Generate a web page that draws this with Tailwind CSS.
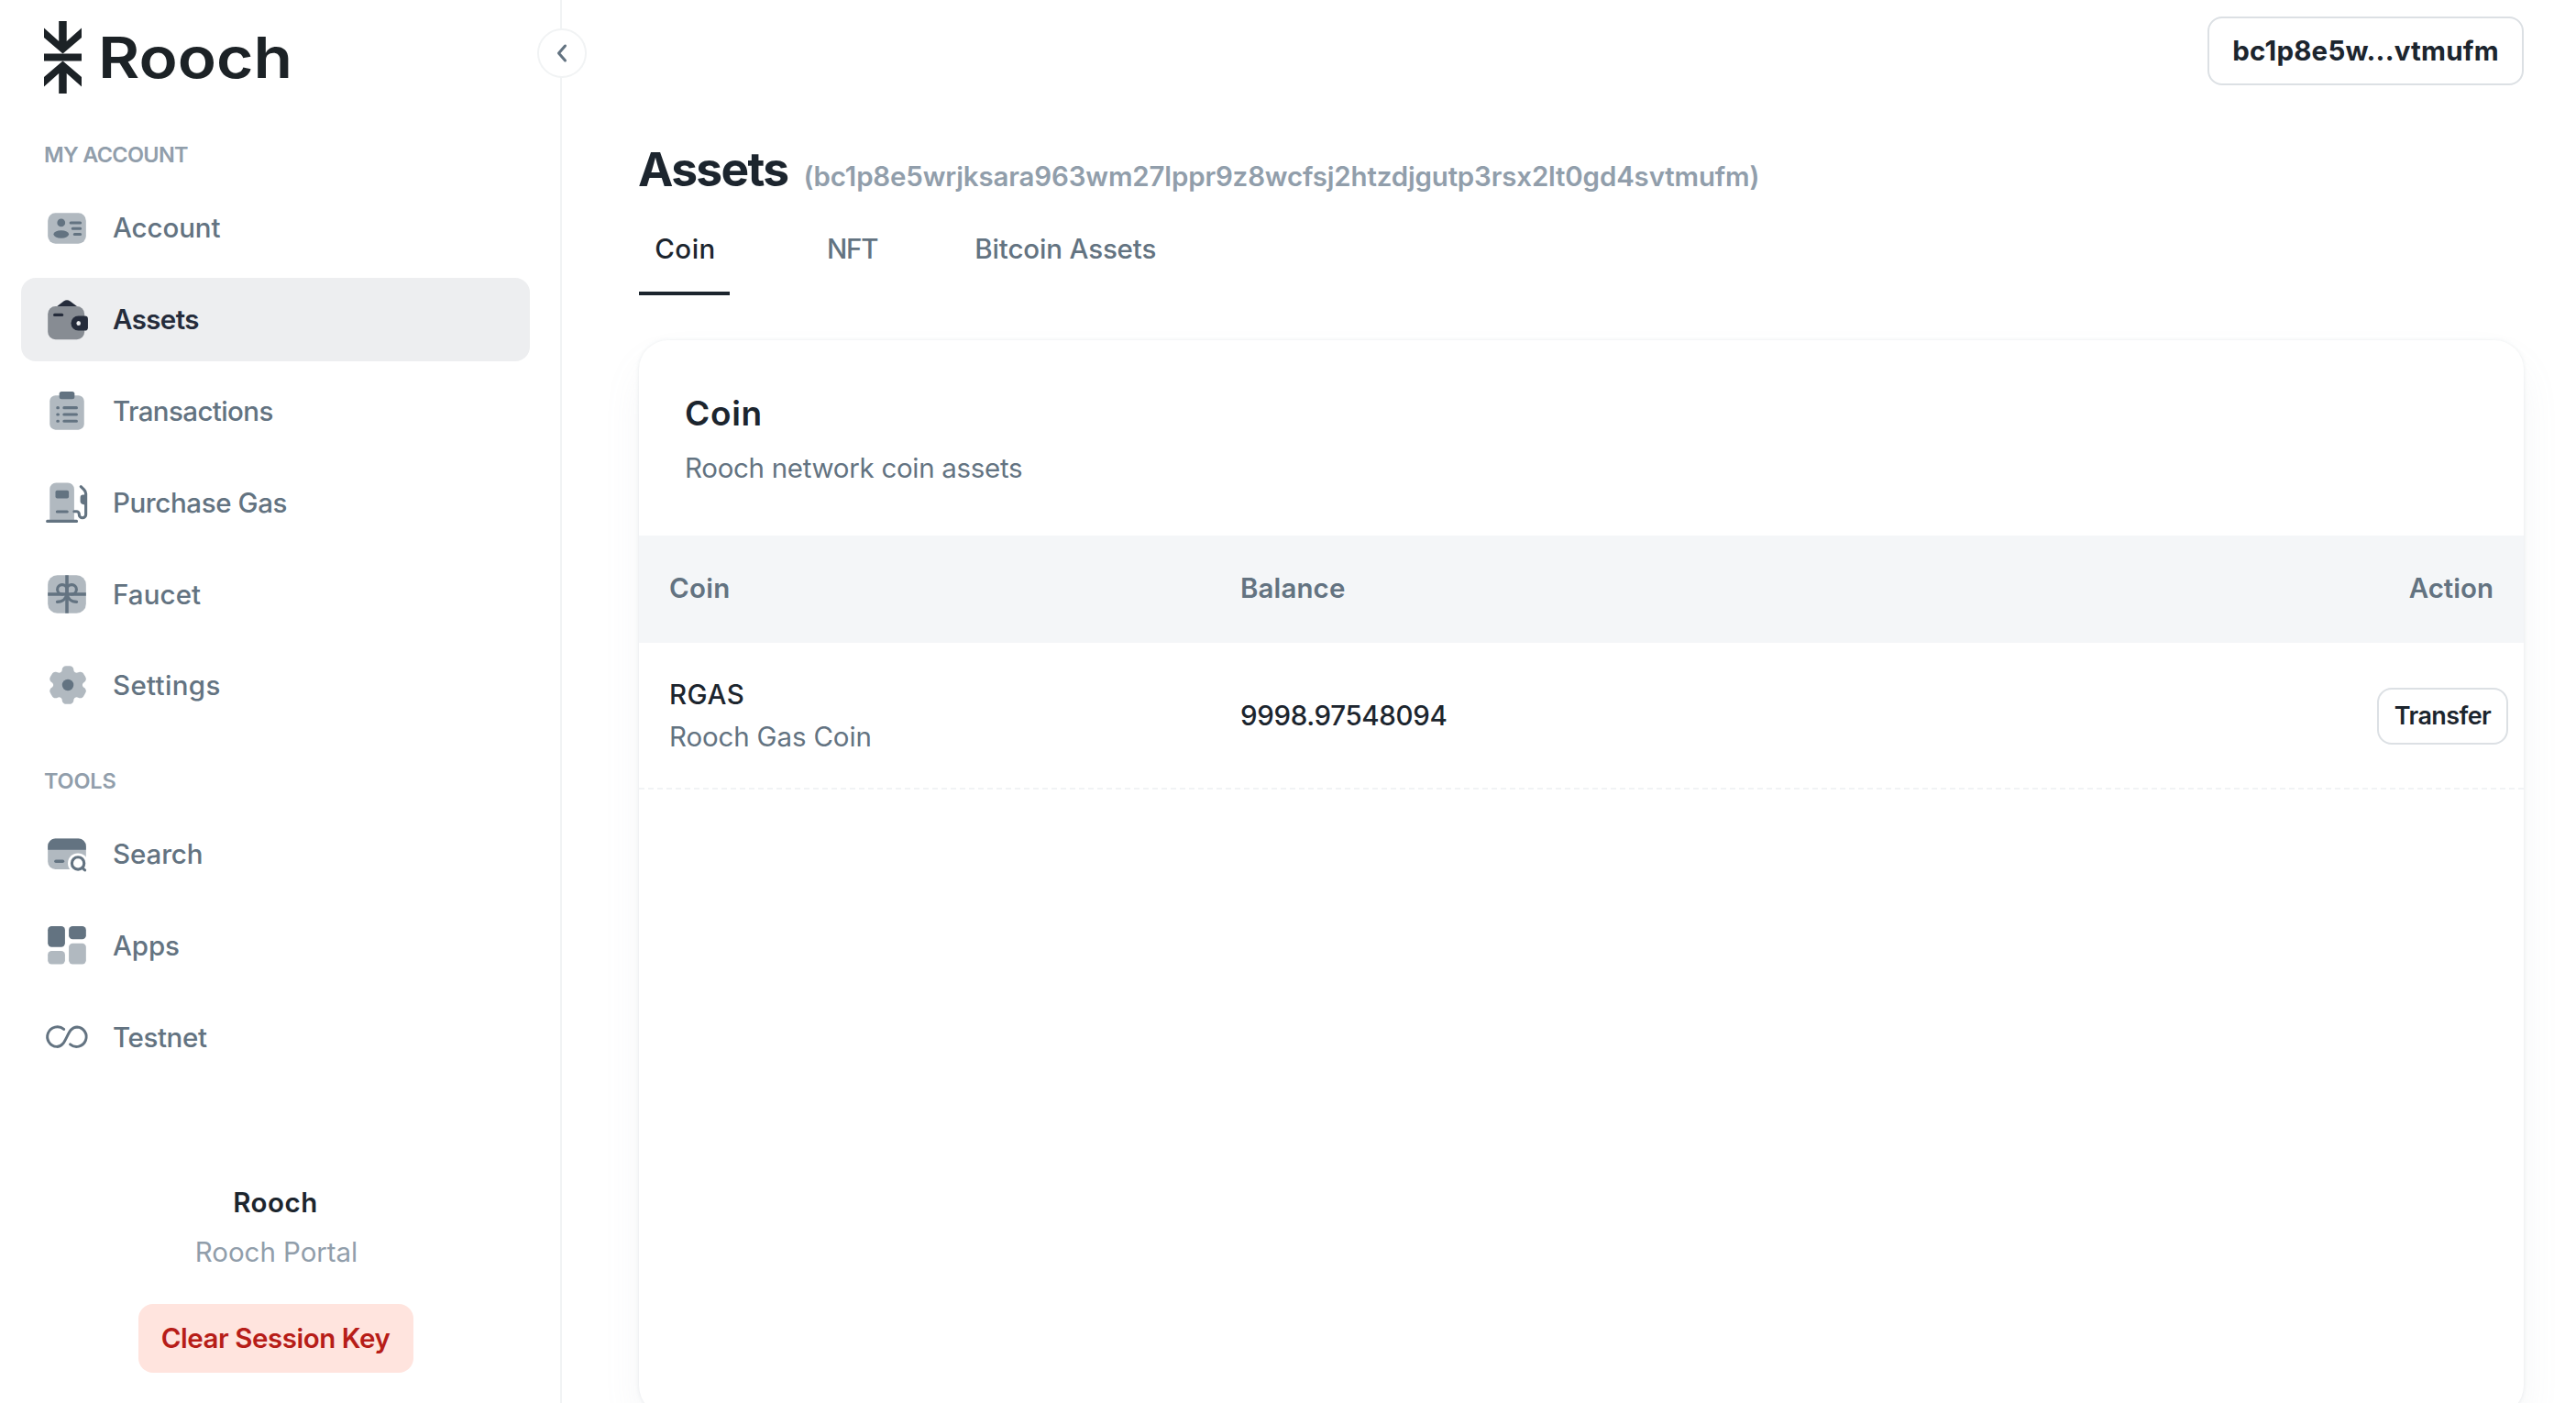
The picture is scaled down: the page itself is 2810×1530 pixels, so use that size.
<!DOCTYPE html>
<html lang="en">
<head>
    <meta charset="UTF-8">
    <meta name="viewport" content="width=device-width, initial-scale=1.0">
    <title>Assets | Rooch Portal</title>
    <script src="https://cdn.jsdelivr.net/npm/@tailwindcss/browser@4"></script>
</head>
<body class="bg-white font-['Inter',sans-serif] text-[29.5px] text-[#1c252e]">
<div class="flex h-screen overflow-hidden">

  <!-- Sidebar -->
  <aside class="relative w-[613px] shrink-0 h-full pl-[23px] pr-[33px] border-r-2 border-[#f1f3f4]">

    <!-- Logo -->
    <a href="#" class="flex h-[151px] pt-[23px] pl-[25px]">
      <svg class="w-[41px] h-[79px]" viewBox="0 0 41 79" fill="#1c2226">
        <path d="M0 7.5 16.2 22V0h8.5v22L41 7.5V18L20.5 35.5 0 18z"/>
        <path d="M0 35.5h41v8H0z"/>
        <path d="M0 71.5 16.2 57v22h8.5V57L41 71.5V61L20.5 43.5 0 61z"/>
      </svg>
      <span class="ml-[18px] origin-left scale-x-[1.12] text-[62px] leading-[79px] font-semibold text-[#1c2226]">Rooch</span>
    </a>

    <!-- My account -->
    <div class="h-[36px] leading-[36px] pl-[25px] text-[23.5px] font-semibold tracking-[-0.7px] text-[#919eab]">MY ACCOUNT</div>
    <nav class="mt-[16px] flex flex-col gap-[8.8px] font-medium text-[#637381]">
      <a href="#" class="flex items-center h-[91px] pl-[25px] gap-[25px] rounded-2xl">
        <svg class="size-[50px]" viewBox="0 0 24 24" fill="currentColor">
          <rect x="2" y="4" width="20" height="16" rx="4" opacity=".5"/>
          <circle cx="9" cy="9.1" r="2.1"/>
          <ellipse cx="9" cy="15.1" rx="4" ry="2"/>
          <path d="M14 9.1h5M15 12.1h4M16 15.1h3" stroke="currentColor" stroke-width="1.5" stroke-linecap="round"/>
        </svg>
        <span class="tracking-[-0.1px]">Account</span>
      </a>
      <a href="#" class="flex items-center h-[91px] pl-[25px] gap-[25px] rounded-2xl bg-[#edeef0] text-[#252c3b] font-semibold">
        <svg class="size-[50px]" viewBox="0 0 24 24" fill="currentColor">
          <path d="M6.7 5.4 10.3 2.6Q12 1.4 13.7 2.6L17.4 5.4z"/>
          <rect x="2" y="5.3" width="19.2" height="17.4" rx="4" fill="#878c93"/>
          <path d="M5.6 9.8h3.8" stroke="currentColor" stroke-width="1.6" stroke-linecap="round"/>
          <path d="M18 10.3h3.4A1.6 1.6 0 0 1 23 11.9v4.5A1.6 1.6 0 0 1 21.4 18H18a3.85 3.85 0 0 1 0-7.7z"/>
          <ellipse cx="18.1" cy="14.2" rx="1.1" ry="1.2" fill="#edeef0"/>
        </svg>
        <span class="tracking-[-0.6px]">Assets</span>
      </a>
      <a href="#" class="flex items-center h-[91px] pl-[25px] gap-[25px] rounded-2xl">
        <svg class="size-[50px]" viewBox="0 0 24 24" fill="currentColor">
          <rect x="3" y="3.9" width="18" height="18" rx="3" opacity=".5"/>
          <rect x="8" y="1.9" width="8" height="4" rx="1.2"/>
          <path d="M7.1 10.4h.3M7.1 13.9h.3M7.1 17.4h.3M10.5 10.4H17M10.5 13.9H17M10.5 17.4H17" stroke="currentColor" stroke-width="1.5" stroke-linecap="round"/>
        </svg>
        <span class="tracking-[-0.6px]">Transactions</span>
      </a>
      <a href="#" class="flex items-center h-[91px] pl-[25px] gap-[25px] rounded-2xl">
        <svg class="size-[50px]" viewBox="0 0 24 24" fill="currentColor">
          <path d="M3 21.2V5a3.3 3.3 0 0 1 3.3-3.3h6.2A3.3 3.3 0 0 1 15.8 5v16.2z" opacity=".5"/>
          <rect x="6" y="5.6" width="7" height="4.2" rx=".9"/>
          <path d="M6.9 16.8h5.2M1.75 21.8h15.3" stroke="currentColor" stroke-width="1.5" stroke-linecap="round"/>
          <path d="M15.8 16.7h1.2a1.4 1.4 0 0 1 1.4 1.4v.2a1.75 1.75 0 0 0 3.5 0V7.3c0-.9-.4-1.5-1-2.1L19.3 3.7" fill="none" stroke="currentColor" stroke-width="1.5" stroke-linecap="round"/>
          <path d="M22 7.9h-1.5A1.5 1.5 0 0 0 19 9.4v2c0 .7.4 1.2 1 1.4l2 .7z"/>
        </svg>
        <span class="tracking-[-0.4px]">Purchase Gas</span>
      </a>
      <a href="#" class="flex items-center h-[91px] pl-[25px] gap-[25px] rounded-2xl">
        <svg class="size-[50px]" viewBox="0 0 24 24" fill="none" stroke="currentColor" stroke-width="1.5">
          <rect x="2" y="2" width="20" height="20" rx="5" fill="currentColor" stroke="none" opacity=".5"/>
          <path d="M12 2v20M2 12h20" stroke-width="1.7"/>
          <path d="M12 12V9.5A2.5 2.5 0 1 0 9.5 12M12 12V9.5A2.5 2.5 0 1 1 14.5 12M12 11.5c-.3 2.8-2.2 4.5-5.1 4.5M12 11.5c.3 2.8 2.2 4.5 5.1 4.5" stroke-linecap="round"/>
        </svg>
        <span class="tracking-[0.1px]">Faucet</span>
      </a>
      <a href="#" class="flex items-center h-[91px] pl-[25px] gap-[25px] rounded-2xl">
        <svg class="size-[50px]" viewBox="0 0 24 24" fill="currentColor">
          <path opacity=".5" d="M14.279 2.152C13.909 2 13.439 2 12.5 2s-1.408 0-1.779.152a2 2 0 0 0-1.09 1.083c-.094.223-.13.484-.145.863a1.62 1.62 0 0 1-.796 1.353a1.64 1.64 0 0 1-1.579.008c-.338-.178-.583-.276-.825-.308a2.03 2.03 0 0 0-1.49.396c-.318.242-.553.646-1.022 1.453c-.47.807-.704 1.21-.757 1.605c-.07.526.074 1.058.4 1.479c.148.192.357.353.68.555c.477.297.783.803.783 1.361s-.306 1.064-.782 1.36c-.324.203-.533.364-.682.556a2 2 0 0 0-.399 1.479c.053.394.287.798.757 1.605s.704 1.21 1.022 1.453c.424.323.96.465 1.49.396c.242-.032.487-.13.825-.308a1.64 1.64 0 0 1 1.58.008c.486.28.774.795.795 1.353c.015.38.051.64.145.863c.204.49.596.88 1.09 1.083c.37.152.84.152 1.779.152s1.409 0 1.779-.152a2 2 0 0 0 1.09-1.083c.094-.223.13-.483.145-.863c.02-.558.309-1.074.796-1.353a1.64 1.64 0 0 1 1.579-.008c.338.178.583.276.825.308c.53.07 1.066-.073 1.49-.396c.318-.242.553-.646 1.022-1.453c.47-.807.704-1.21.757-1.605a2 2 0 0 0-.4-1.479c-.148-.192-.357-.353-.68-.555c-.477-.297-.783-.803-.783-1.361s.306-1.064.782-1.36c.324-.203.533-.364.682-.556a2 2 0 0 0 .399-1.479c-.053-.394-.287-.798-.757-1.605s-.704-1.21-1.022-1.453a2.03 2.03 0 0 0-1.49-.396c-.242.032-.487.13-.825.308a1.64 1.64 0 0 1-1.58-.008a1.62 1.62 0 0 1-.795-1.353c-.015-.38-.051-.64-.145-.863a2 2 0 0 0-1.09-1.083"/>
          <circle cx="12.5" cy="12" r="3"/>
        </svg>
        <span class="tracking-[0.34px]">Settings</span>
      </a>
    </nav>

    <!-- Tools -->
    <div class="mt-[41px] h-[36px] leading-[36px] pl-[25px] text-[23.5px] font-semibold tracking-[-0.2px] text-[#919eab]">TOOLS</div>
    <nav class="mt-[16px] flex flex-col gap-[8.6px] font-medium text-[#637381]">
      <a href="#" class="flex items-center h-[91px] pl-[25px] gap-[25px] rounded-2xl">
        <svg class="size-[50px]" viewBox="0 0 24 24" fill="currentColor">
          <rect x="2" y="4.1" width="20" height="16" rx="4" fill="#b1b9c0"/>
          <path d="M2 10V8.1a4 4 0 0 1 4-4h12a4 4 0 0 1 4 4V10z"/>
          <path d="M6.2 16h3.6" stroke="currentColor" stroke-width="1.7" stroke-linecap="round"/>
          <circle cx="17.8" cy="17" r="5.3" fill="#fff"/>
          <path d="M20.1 19.5l1.3 1.1" fill="none" stroke="currentColor" stroke-width="1.5" stroke-linecap="round"/>
          <circle cx="17.8" cy="17" r="3.2" fill="none" stroke="currentColor" stroke-width="1.5"/>
        </svg>
        <span class="tracking-[-0.1px]">Search</span>
      </a>
      <a href="#" class="flex items-center h-[91px] pl-[25px] gap-[25px] rounded-2xl">
        <svg class="size-[50px]" viewBox="0 0 24 24" fill="currentColor">
          <rect x="2" y="1.9" width="9" height="10.9" rx="2"/>
          <rect x="13" y="1.9" width="9" height="6.9" rx="2"/>
          <rect x="2" y="14.9" width="9" height="6.9" rx="2" opacity=".5"/>
          <rect x="13" y="10.9" width="9" height="10.9" rx="2" opacity=".5"/>
        </svg>
        <span class="tracking-[-0.1px]">Apps</span>
      </a>
      <a href="#" class="flex items-center h-[91px] pl-[25px] gap-[25px] rounded-2xl">
        <svg class="size-[50px]" viewBox="0 0 24 24" fill="none" stroke="currentColor" stroke-width="1.4" stroke-linecap="round">
          <path d="M10.4 7.9A5.2 5.2 0 1 0 6.7 17C12.4 17 11.6 6.7 17.3 6.7A5.15 5.15 0 1 1 13.7 15.8"/>
        </svg>
        <span class="tracking-[-0.4px]">Testnet</span>
      </a>
    </nav>

    <!-- Footer -->
    <div class="mt-[112.8px] flex flex-col items-center text-center">
      <h6 class="leading-[44px] font-semibold tracking-[0.5px]">Rooch</h6>
      <p class="mt-[10px] leading-[44px] pl-[2px] tracking-[-0.05px] text-[#919eab]">Rooch Portal</p>
      <button class="mt-[35px] w-[300px] h-[75px] rounded-2xl bg-[#ffe4de] font-semibold tracking-[-0.45px] whitespace-nowrap text-[#b71d18]">Clear Session Key</button>
    </div>

    <!-- Collapse toggle -->
    <button class="absolute top-[31px] -right-[29px] size-[54px] rounded-full border-2 border-[#f1f3f4] bg-white flex items-center justify-center">
      <svg class="w-[12px] h-[22px]" viewBox="0 0 12 22" fill="none" stroke="#637381" stroke-width="3" stroke-linecap="round" stroke-linejoin="round">
        <path d="M9.5 3 2.5 11l7 8"/>
      </svg>
    </button>
  </aside>

  <!-- Main -->
  <main class="flex-1 pl-[84px] pr-[57px]">
    <header class="flex justify-end h-[154px] pt-[18px]">
      <button class="w-[345px] h-[75px] rounded-2xl border-2 border-[#dce0e4] font-bold tracking-[0.2px]">bc1p8e5w...vtmufm</button>
    </header>

    <div class="flex items-baseline gap-[17px] h-[60px] leading-[60px]">
      <h4 class="-ml-px text-[51.5px] font-bold tracking-[-1.7px]">Assets</h4>
      <span class="font-semibold tracking-[-0.17px] text-[#919eab]">(bc1p8e5wrjksara963wm27lppr9z8wcfsj2htzdjgutp3rsx2lt0gd4svtmufm)</span>
    </div>

    <!-- Tabs -->
    <div class="flex gap-[106px] h-[108px] pt-[35px] leading-[44px] font-medium text-[#637381]">
      <button class="w-[99px] pb-[25px] pl-[2px] border-b-4 border-[#1c252e] text-[#1c252e] tracking-[0.5px]">Coin</button>
      <button class="pb-[25px] border-b-4 border-transparent tracking-[-1.2px]">NFT</button>
      <button class="pb-[25px] border-b-4 border-transparent tracking-[-0.16px]">Bitcoin Assets</button>
    </div>

    <!-- Coin card -->
    <section class="mt-[49px] h-[1172px] pt-[52px] rounded-[32px] bg-white shadow-[0_0_4px_rgba(145,158,171,0.2),0_24px_48px_-8px_rgba(145,158,171,0.12)]">
      <div class="pl-[50px]">
        <h6 class="text-[37px] leading-[56px] font-semibold tracking-[0.7px]">Coin</h6>
        <p class="mt-[9px] leading-[44px] tracking-[-0.3px] text-[#637381]">Rooch network coin assets</p>
      </div>

      <div class="mt-[52px] grid grid-cols-[623px_1fr_auto] items-center h-[117px] pl-[33px] pr-[33px] pb-[2px] bg-[#f4f6f8] font-semibold text-[#637381]">
        <span class="tracking-[0.3px]">Coin</span>
        <span class="tracking-[0.1px]">Balance</span>
        <span>Action</span>
      </div>

      <div class="grid grid-cols-[623px_1fr_auto] items-center h-[160px] pl-[33px] pr-[17px] pb-px border-b-2 border-dashed border-[#f1f3f5] leading-[46px]">
        <div>
          <p class="font-medium tracking-[0.5px]">RGAS</p>
          <p class="tracking-[-0.15px] text-[#637381]">Rooch Gas Coin</p>
        </div>
        <span class="font-medium tracking-[-0.35px]">9998.97548094</span>
        <button class="w-[143px] h-[62px] mt-[2px] rounded-2xl border-2 border-[#dce0e4] text-[27px] leading-[58px] font-semibold tracking-[-0.6px]">Transfer</button>
      </div>
    </section>
  </main>
</div>
</body>
</html>
